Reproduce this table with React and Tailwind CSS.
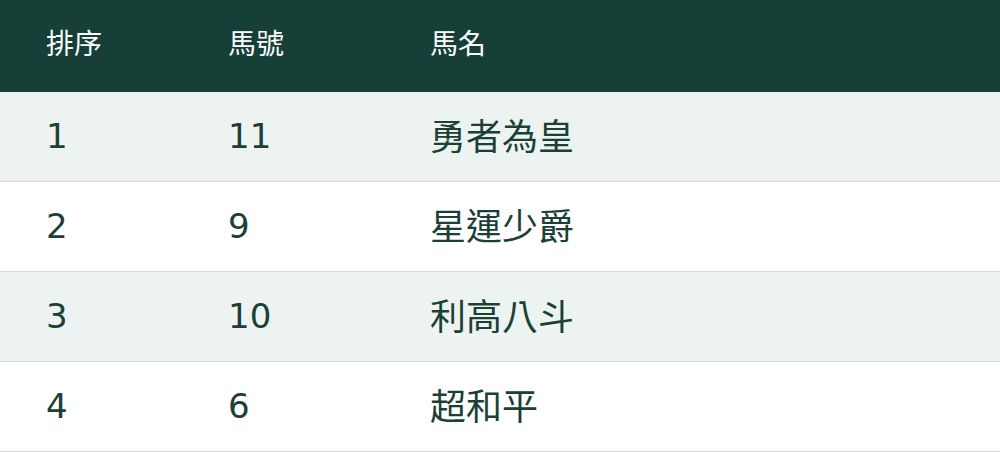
const rows = [
  { rank: '1', no: '11', name: '勇者為皇' },
  { rank: '2', no: '9', name: '星運少爵' },
  { rank: '3', no: '10', name: '利高八斗' },
  { rank: '4', no: '6', name: '超和平' },
];

export default function App() {
  return (
    <div className="w-[1000px] h-[452px] overflow-hidden bg-white font-['DejaVu_Sans','Noto_Sans_CJK_TC',sans-serif]">
      <div className="flex h-[92px] items-center bg-[#163f37] pb-[8px] text-[28px] text-white font-['Noto_Sans_CJK_TC',sans-serif]">
        <div className="w-[228px] pl-[46px]">排序</div>
        <div className="w-[202px]">馬號</div>
        <div className="flex-1">馬名</div>
      </div>
      {rows.map((r, i) => (
        <div
          key={r.rank}
          className={
            'flex h-[90px] items-center border-b border-[#d5dad8] text-[34px] text-[#1b4036] ' +
            (i % 2 === 0 ? 'bg-[#edf3f1]' : 'bg-white')
          }
        >
          <div className="w-[228px] pl-[46px]">{r.rank}</div>
          <div className="w-[202px]">{r.no}</div>
          <div className="flex-1 pb-[6px] text-[36px] font-['Noto_Sans_CJK_TC',sans-serif]">{r.name}</div>
        </div>
      ))}
    </div>
  );
}
